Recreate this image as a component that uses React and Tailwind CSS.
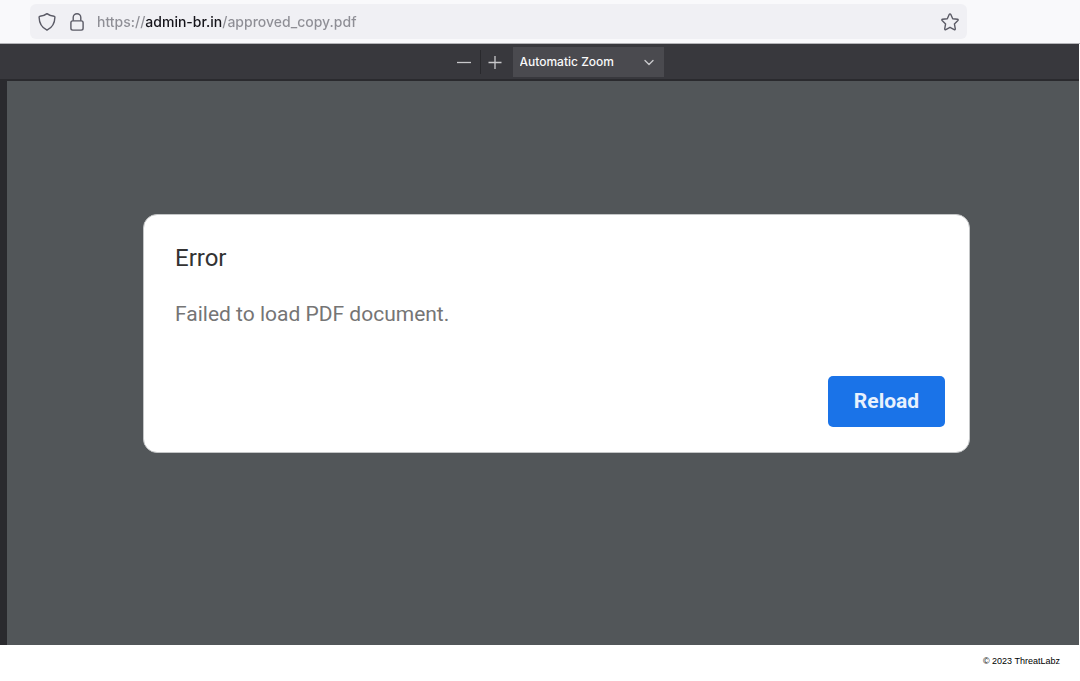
import { useState } from "react";

const ShieldIcon = () => (
  <svg viewBox="0 0 18 20" className="w-[18px] h-5" fill="none" stroke="currentColor" strokeWidth="1.4" strokeLinejoin="round">
    <path d="M9 1.6C7 3.2 4.300 4.200 1.900 4.300C1.300 4.300 1.100 4.700 1.100 5.200C1.200 11 3.500 15.400 9 18.200C14.500 15.400 16.800 11 16.900 5.200C16.900 4.700 16.700 4.300 16.100 4.300C13.700 4.200 11 3.200 9 1.600Z" />
  </svg>
);

const LockIcon = () => (
  <svg viewBox="0 0 16 20" className="w-4 h-5" fill="none" stroke="currentColor" strokeWidth="1.4">
    <rect x="1.900" y="8.900" width="12.200" height="9.200" rx="1.800" />
    <path d="M4.200 8.700V5.500a3.800 3.800 0 0 1 7.600 0v3.200" />
  </svg>
);

const StarIcon = () => (
  <svg viewBox="0 0 20 20" className="w-5 h-5" fill="none" stroke="currentColor" strokeWidth="1.4" strokeLinejoin="round">
    <path d="M9.300 2.300a.8.8 0 0 1 1.400 0l2 4.400 4.800.6c.7.1.9.8.4 1.300l-3.500 3.300.9 4.900c.1.7-.5 1.100-1.100.8L10 15.300l-4.200 2.300c-.6.3-1.200-.1-1.100-.8l.9-4.900-3.500-3.300c-.5-.5-.3-1.200.4-1.300l4.800-.6z" />
  </svg>
);

const AddressBar = () => {
  const [url, setUrl] = useState("https://admin-br.in/approved_copy.pdf");

  return (
    <header className="bg-[#f9f9fb] border-b border-[#b4b4b8] pt-1 pb-1 pl-[30px] pr-[113px]">
      <div className="flex items-center h-[35px] rounded-md bg-[#f0f0f4] pl-2 pr-[7px] text-[#5b5b66]">
        <button aria-label="Tracking protection">
          <ShieldIcon />
        </button>
        <button aria-label="Site information" className="ml-[13px]">
          <LockIcon />
        </button>
        {/* the host part of the address is darker than the rest */}
        <input
          type="text"
          aria-label="Address"
          spellCheck={false}
          value={url}
          onChange={(e) => setUrl(e.target.value)}
          className="flex-1 min-w-0 ml-3 h-7 outline-none font-['Inter',sans-serif] text-sm font-medium text-transparent caret-black bg-clip-text bg-[linear-gradient(90deg,#8e8e95_48px,#15141a_48px,#15141a_125px,#8e8e95_125px)]"
        />
        <button aria-label="Bookmark this page">
          <StarIcon />
        </button>
      </div>
    </header>
  );
};

const Toolbar = () => {
  const [zoom, setZoom] = useState("auto");

  return (
    <div className="flex items-center justify-center h-[37px] pl-8 bg-[#38383d] border-b-2 border-[#2a2a2e] text-[#c8c8cb]">
      <button aria-label="Zoom out" className="w-8 h-8 flex items-center justify-center">
        <svg viewBox="0 0 14 14" className="w-[14px] h-[14px]" stroke="currentColor" strokeWidth="1.300">
          <path d="M0 7.500h14" />
        </svg>
      </button>
      <span className="w-px h-6 bg-[#29292d]" />
      <button aria-label="Zoom in" className="w-7 h-8 mr-1 flex items-center justify-center">
        <svg viewBox="0 0 14 14" className="w-[14px] h-[14px]" stroke="currentColor" strokeWidth="1.300">
          <path d="M.5 7.500h13M7 1v13" />
        </svg>
      </button>
      <div className="relative w-[151px]">
        <select
          aria-label="Zoom"
          value={zoom}
          onChange={(e) => setZoom(e.target.value)}
          className="appearance-none w-full h-[30px] pl-[7px] pr-7 bg-[#4a4a4f] text-[#f9f9fa] font-['Inter',sans-serif] text-xs font-medium outline-none"
        >
          <option value="auto">Automatic Zoom</option>
        </select>
        <svg
          viewBox="0 0 12 8"
          className="absolute right-[9px] top-3 w-3 h-2 pointer-events-none"
          fill="none"
          stroke="currentColor"
          strokeWidth="1.400"
          strokeLinecap="round"
          strokeLinejoin="round"
        >
          <path d="M2 1.500l4 4 4-4" />
        </svg>
      </div>
    </div>
  );
};

const ErrorDialog = ({ onReload }) => (
  <section
    role="alertdialog"
    aria-labelledby="error-title"
    className="w-full bg-white border border-[#c4c6c7] rounded-[14px] pt-[27px] pb-[25px] pl-[31px] pr-6 font-['Roboto',sans-serif]"
  >
    <h1 id="error-title" className="text-2xl leading-8 text-[#333333]">
      Error
    </h1>
    <p className="mt-6 text-[21px] leading-8 text-[#757575]">Failed to load PDF document.</p>
    <div className="mt-[46px] flex justify-end">
      <button onClick={onReload} className="w-[117px] h-[51px] rounded-[5px] bg-[#1a73e8] text-[#e8f1fd] text-[21px] font-bold">
        Reload
      </button>
    </div>
  </section>
);

export default function App() {
  return (
    <div className="min-h-screen flex flex-col bg-white">
      <AddressBar />
      <div className="flex-1 flex flex-col mr-px">
        <Toolbar />
        <main className="flex-1 bg-[#525659] border-l-[7px] border-[#2a2a2e] pt-[133px] pb-10 pl-[136px] pr-[109px]">
          <ErrorDialog onReload={() => window.location.reload()} />
        </main>
      </div>
      <footer className="h-9 pt-2 pr-5 text-right font-['Liberation_Sans',sans-serif] text-[9px] leading-4 text-black">
        © 2023 ThreatLabz
      </footer>
    </div>
  );
}
